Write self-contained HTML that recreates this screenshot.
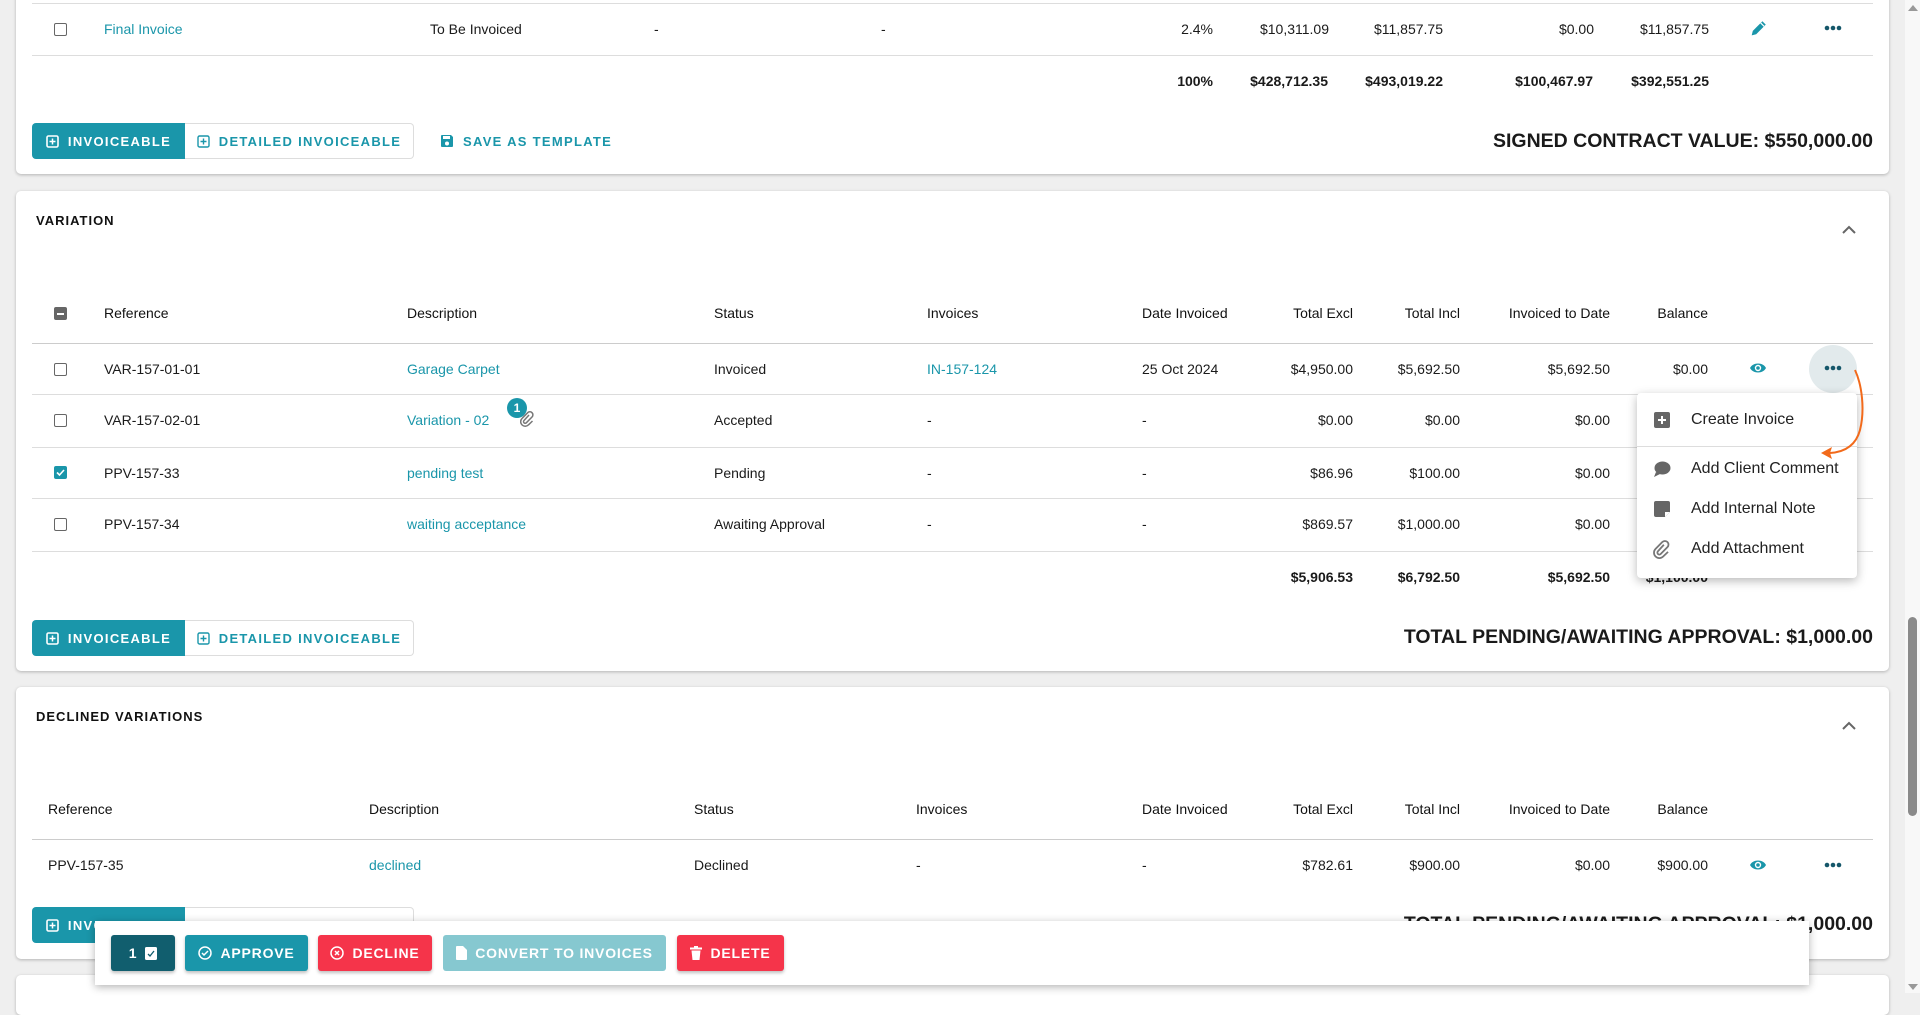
<!DOCTYPE html>
<html><head><meta charset="utf-8">
<style>
*{margin:0;padding:0;box-sizing:border-box}
body{width:1920px;height:993px;overflow:hidden;background:#efefef;font-family:"Liberation Sans",sans-serif;font-size:14px;color:#1a1a1a;position:relative}
.card{position:absolute;left:16px;width:1873px;background:#fff;border-radius:5px;box-shadow:0 1px 3px rgba(0,0,0,.25)}
.t{position:absolute;line-height:18px;white-space:nowrap}
.h{color:#111}
.b{font-weight:bold}
.big{font-weight:bold;font-size:19.5px;line-height:26px;right:47px}
.lk{color:#1a96aa}
.ln{position:absolute;left:32px;width:1841px;height:1px;background:#ddd}
.cb{position:absolute;width:13px;height:13px;border:1.5px solid #666;border-radius:2px}
.title{position:absolute;font-weight:bold;font-size:13px;letter-spacing:1px;color:#111}
.btn{position:absolute;height:36px;font-weight:bold;font-size:13px;letter-spacing:1.3px;display:flex;align-items:center;justify-content:center;gap:9px}
.ab{position:absolute;top:935px;height:36px;border-radius:3px;color:#fff;font-weight:bold;font-size:14px;letter-spacing:.8px;display:flex;align-items:center;justify-content:center;gap:8px;box-shadow:0 2px 3px rgba(0,0,0,.25)}
.mi{position:absolute;left:1691px;font-size:16px;color:#222;line-height:20px}
</style></head><body>

<!-- Card 1 -->
<div class="card" style="top:-20px;height:194px"></div>
<div class="ln" style="top:3px"></div>
<div class="cb" style="left:54px;top:23px"></div>
<div class="t lk" style="left:104px;top:20px">Final Invoice</div>
<div class="t" style="left:430px;top:20px">To Be Invoiced</div>
<div class="t" style="left:654px;top:20px">-</div>
<div class="t" style="left:881px;top:20px">-</div>
<div class="t" style="right:707px;top:20px">2.4%</div>
<div class="t" style="right:591px;top:20px">$10,311.09</div>
<div class="t" style="right:477px;top:20px">$11,857.75</div>
<div class="t" style="right:326px;top:20px">$0.00</div>
<div class="t" style="right:211px;top:20px">$11,857.75</div>
<svg style="position:absolute;left:1750px;top:19px" width="18" height="18" viewBox="0 0 16 16"><path d="M1.5 14.5l1-4 8.5-8.5 3 3-8.5 8.5z" fill="#1a96aa"/><path d="M9.5 3.5l3 3" stroke="#fff" stroke-width="1"/></svg>
<svg style="position:absolute;left:1823px;top:24px" width="20" height="8"><circle cx="4" cy="4" r="2.3" fill="#15576a"/><circle cx="10" cy="4" r="2.3" fill="#15576a"/><circle cx="16" cy="4" r="2.3" fill="#15576a"/></svg>
<div class="ln" style="top:55px"></div>
<div class="t b" style="right:707px;top:72px">100%</div>
<div class="t b" style="right:592px;top:72px">$428,712.35</div>
<div class="t b" style="right:477px;top:72px">$493,019.22</div>
<div class="t b" style="right:327px;top:72px">$100,467.97</div>
<div class="t b" style="right:211px;top:72px">$392,551.25</div>

<div class="btn" style="left:32px;top:123px;width:153px;background:#1a96aa;color:#fff;border-radius:4px 0 0 4px">
<svg width="13" height="13"><rect x="1" y="1" width="11" height="11" rx="1.5" fill="none" stroke="#fff" stroke-width="1.6"/><path d="M6.5 3.5v6M3.5 6.5h6" stroke="#fff" stroke-width="1.5"/></svg>INVOICEABLE</div>
<div class="btn" style="left:185px;top:123px;width:229px;border:1px solid #ddd;border-left:none;color:#1a96aa;border-radius:0 4px 4px 0">
<svg width="13" height="13"><rect x="1" y="1" width="11" height="11" rx="1.5" fill="none" stroke="#1a96aa" stroke-width="1.4"/><path d="M6.5 3.5v6M3.5 6.5h6" stroke="#1a96aa" stroke-width="1.4"/></svg>DETAILED INVOICEABLE</div>
<div class="btn" style="left:440px;top:123px;color:#1a96aa">
<svg width="14" height="14"><path d="M1 2a1 1 0 011-1h9l2 2v9a1 1 0 01-1 1H2a1 1 0 01-1-1z" fill="#1a96aa"/><rect x="3" y="2" width="7" height="3" fill="#fff"/><circle cx="7" cy="9.5" r="2" fill="#fff"/></svg>SAVE AS TEMPLATE</div>
<div class="t big" style="top:128px">SIGNED CONTRACT VALUE: $550,000.00</div>

<!-- Card 2 -->
<div class="card" style="top:191px;height:480px"></div>
<div class="title" style="left:36px;top:213px">VARIATION</div>
<svg style="position:absolute;left:1841px;top:225px" width="16" height="10"><path d="M2 8l6-6 6 6" fill="none" stroke="#666" stroke-width="2"/></svg>
<div style="position:absolute;left:54px;top:307px;width:13px;height:13px;background:#666;border-radius:2px"><div style="position:absolute;left:3px;top:5.5px;width:7px;height:2px;background:#fff"></div></div>
<div class="t h" style="left:104px;top:304px">Reference</div>
<div class="t h" style="left:407px;top:304px">Description</div>
<div class="t h" style="left:714px;top:304px">Status</div>
<div class="t h" style="left:927px;top:304px">Invoices</div>
<div class="t h" style="left:1142px;top:304px">Date Invoiced</div>
<div class="t h" style="right:567px;top:304px">Total Excl</div>
<div class="t h" style="right:460px;top:304px">Total Incl</div>
<div class="t h" style="right:310px;top:304px">Invoiced to Date</div>
<div class="t h" style="right:212px;top:304px">Balance</div>
<div class="ln" style="top:343px;background:#ccc"></div>

<div class="cb" style="left:54px;top:363px"></div>
<div class="t" style="left:104px;top:360px">VAR-157-01-01</div>
<div class="t lk" style="left:407px;top:360px">Garage Carpet</div>
<div class="t" style="left:714px;top:360px">Invoiced</div>
<div class="t lk" style="left:927px;top:360px">IN-157-124</div>
<div class="t" style="left:1142px;top:360px">25 Oct 2024</div>
<div class="t" style="right:567px;top:360px">$4,950.00</div>
<div class="t" style="right:460px;top:360px">$5,692.50</div>
<div class="t" style="right:310px;top:360px">$5,692.50</div>
<div class="t" style="right:212px;top:360px">$0.00</div>
<svg style="position:absolute;left:1749px;top:361px" width="18" height="14" viewBox="0 0 18 14"><path d="M1 7C4 1 14 1 17 7 14 13 4 13 1 7z" fill="#1a96aa"/><circle cx="9" cy="7" r="3.2" fill="#fff"/><circle cx="9" cy="7" r="1.8" fill="#1a96aa"/></svg>
<div style="position:absolute;left:1809px;top:345px;width:48px;height:48px;border-radius:50%;background:#e2eaec"></div>
<svg style="position:absolute;left:1823px;top:364px" width="20" height="8"><circle cx="4" cy="4" r="2.3" fill="#15576a"/><circle cx="10" cy="4" r="2.3" fill="#15576a"/><circle cx="16" cy="4" r="2.3" fill="#15576a"/></svg>
<div class="ln" style="top:394px"></div>

<div class="cb" style="left:54px;top:414px"></div>
<div class="t" style="left:104px;top:411px">VAR-157-02-01</div>
<div class="t lk" style="left:407px;top:411px">Variation - 02</div>
<div style="position:absolute;left:507px;top:398px;width:20px;height:20px;border-radius:50%;background:#1a96aa;color:#fff;font-size:12px;font-weight:bold;text-align:center;line-height:20px">1</div>
<svg style="position:absolute;left:520px;top:411px" width="14" height="16" viewBox="0 0 14 16"><path d="M9 4l-5 5.5a1.6 1.6 0 002.3 2.3L12 6a3 3 0 00-4.3-4.3L2 7.5a4.5 4.5 0 006.4 6.4L12.5 10" fill="none" stroke="#777" stroke-width="1.5"/></svg>
<div class="t" style="left:714px;top:411px">Accepted</div>
<div class="t" style="left:927px;top:411px">-</div>
<div class="t" style="left:1142px;top:411px">-</div>
<div class="t" style="right:567px;top:411px">$0.00</div>
<div class="t" style="right:460px;top:411px">$0.00</div>
<div class="t" style="right:310px;top:411px">$0.00</div>
<div class="ln" style="top:447px"></div>

<div style="position:absolute;left:54px;top:466px;width:13px;height:13px;background:#1a96aa;border-radius:2px"></div>
<svg style="position:absolute;left:54px;top:466px" width="13" height="13"><path d="M3 6.5l2.5 2.5 4.5-5" fill="none" stroke="#fff" stroke-width="1.6"/></svg>
<div class="t" style="left:104px;top:464px">PPV-157-33</div>
<div class="t lk" style="left:407px;top:464px">pending test</div>
<div class="t" style="left:714px;top:464px">Pending</div>
<div class="t" style="left:927px;top:464px">-</div>
<div class="t" style="left:1142px;top:464px">-</div>
<div class="t" style="right:567px;top:464px">$86.96</div>
<div class="t" style="right:460px;top:464px">$100.00</div>
<div class="t" style="right:310px;top:464px">$0.00</div>
<div class="ln" style="top:498px"></div>

<div class="cb" style="left:54px;top:518px"></div>
<div class="t" style="left:104px;top:515px">PPV-157-34</div>
<div class="t lk" style="left:407px;top:515px">waiting acceptance</div>
<div class="t" style="left:714px;top:515px">Awaiting Approval</div>
<div class="t" style="left:927px;top:515px">-</div>
<div class="t" style="left:1142px;top:515px">-</div>
<div class="t" style="right:567px;top:515px">$869.57</div>
<div class="t" style="right:460px;top:515px">$1,000.00</div>
<div class="t" style="right:310px;top:515px">$0.00</div>
<div class="ln" style="top:551px"></div>

<div class="t b" style="right:567px;top:568px">$5,906.53</div>
<div class="t b" style="right:460px;top:568px">$6,792.50</div>
<div class="t b" style="right:310px;top:568px">$5,692.50</div>
<div class="t b" style="right:212px;top:568px">$1,100.00</div>

<div class="btn" style="left:32px;top:620px;width:153px;background:#1a96aa;color:#fff;border-radius:4px 0 0 4px">
<svg width="13" height="13"><rect x="1" y="1" width="11" height="11" rx="1.5" fill="none" stroke="#fff" stroke-width="1.6"/><path d="M6.5 3.5v6M3.5 6.5h6" stroke="#fff" stroke-width="1.5"/></svg>INVOICEABLE</div>
<div class="btn" style="left:185px;top:620px;width:229px;border:1px solid #ddd;border-left:none;color:#1a96aa;border-radius:0 4px 4px 0">
<svg width="13" height="13"><rect x="1" y="1" width="11" height="11" rx="1.5" fill="none" stroke="#1a96aa" stroke-width="1.4"/><path d="M6.5 3.5v6M3.5 6.5h6" stroke="#1a96aa" stroke-width="1.4"/></svg>DETAILED INVOICEABLE</div>
<div class="t big" style="top:624px">TOTAL PENDING/AWAITING APPROVAL: $1,000.00</div>

<!-- Card 3 -->
<div class="card" style="top:687px;height:272px"></div>
<div class="title" style="left:36px;top:709px">DECLINED VARIATIONS</div>
<svg style="position:absolute;left:1841px;top:721px" width="16" height="10"><path d="M2 8l6-6 6 6" fill="none" stroke="#666" stroke-width="2"/></svg>
<div class="t h" style="left:48px;top:800px">Reference</div>
<div class="t h" style="left:369px;top:800px">Description</div>
<div class="t h" style="left:694px;top:800px">Status</div>
<div class="t h" style="left:916px;top:800px">Invoices</div>
<div class="t h" style="left:1142px;top:800px">Date Invoiced</div>
<div class="t h" style="right:567px;top:800px">Total Excl</div>
<div class="t h" style="right:460px;top:800px">Total Incl</div>
<div class="t h" style="right:310px;top:800px">Invoiced to Date</div>
<div class="t h" style="right:212px;top:800px">Balance</div>
<div class="ln" style="top:839px;background:#ccc"></div>
<div class="t" style="left:48px;top:856px">PPV-157-35</div>
<div class="t lk" style="left:369px;top:856px">declined</div>
<div class="t" style="left:694px;top:856px">Declined</div>
<div class="t" style="left:916px;top:856px">-</div>
<div class="t" style="left:1142px;top:856px">-</div>
<div class="t" style="right:567px;top:856px">$782.61</div>
<div class="t" style="right:460px;top:856px">$900.00</div>
<div class="t" style="right:310px;top:856px">$0.00</div>
<div class="t" style="right:212px;top:856px">$900.00</div>
<svg style="position:absolute;left:1749px;top:858px" width="18" height="14" viewBox="0 0 18 14"><path d="M1 7C4 1 14 1 17 7 14 13 4 13 1 7z" fill="#1a96aa"/><circle cx="9" cy="7" r="3.2" fill="#fff"/><circle cx="9" cy="7" r="1.8" fill="#1a96aa"/></svg>
<svg style="position:absolute;left:1823px;top:861px" width="20" height="8"><circle cx="4" cy="4" r="2.3" fill="#15576a"/><circle cx="10" cy="4" r="2.3" fill="#15576a"/><circle cx="16" cy="4" r="2.3" fill="#15576a"/></svg>
<div class="btn" style="left:32px;top:907px;width:153px;background:#1a96aa;color:#fff;border-radius:4px 0 0 4px">
<svg width="13" height="13"><rect x="1" y="1" width="11" height="11" rx="1.5" fill="none" stroke="#fff" stroke-width="1.6"/><path d="M6.5 3.5v6M3.5 6.5h6" stroke="#fff" stroke-width="1.5"/></svg>INVOICEABLE</div>
<div class="btn" style="left:185px;top:907px;width:229px;border:1px solid #ddd;border-left:none;color:#1a96aa;border-radius:0 4px 4px 0">DETAILED INVOICEABLE</div>
<div class="t big" style="top:911px">TOTAL PENDING/AWAITING APPROVAL: $1,000.00</div>

<div class="card" style="top:975px;height:40px"></div>

<!-- Bottom action bar -->
<div style="position:absolute;left:95px;top:921px;width:1714px;height:64px;background:#fff;box-shadow:0 2px 8px rgba(0,0,0,.3)"></div>
<div class="ab" style="left:111px;width:64px;background:#115e6e">1 <svg width="12" height="13"><rect x="0" y="0" width="12" height="13" rx="1.5" fill="#fff"/><path d="M3 7l2 2 4-5" fill="none" stroke="#115e6e" stroke-width="1.3"/></svg></div>
<div class="ab" style="left:185px;width:123px;background:#1a96aa"><svg width="14" height="14"><circle cx="7" cy="7" r="6" fill="none" stroke="#fff" stroke-width="1.5"/><path d="M4 7l2 2 4-4" fill="none" stroke="#fff" stroke-width="1.5"/></svg>APPROVE</div>
<div class="ab" style="left:318px;width:114px;background:#f5344a"><svg width="14" height="14"><circle cx="7" cy="7" r="6" fill="none" stroke="#fff" stroke-width="1.5"/><path d="M5 5l4 4M9 5l-4 4" stroke="#fff" stroke-width="1.5"/></svg>DECLINE</div>
<div class="ab" style="left:443px;width:223px;background:#86c8d0;box-shadow:none"><svg width="11" height="14"><path d="M0 1a1 1 0 011-1h6l4 4v9a1 1 0 01-1 1H1a1 1 0 01-1-1z" fill="#fff"/></svg>CONVERT TO INVOICES</div>
<div class="ab" style="left:677px;width:107px;background:#f5344a"><svg width="12" height="14"><rect x="0" y="1.5" width="12" height="2" fill="#fff"/><rect x="4" y="0" width="4" height="2" fill="#fff"/><path d="M1.5 4.5h9l-1 9.5h-7z" fill="#fff"/></svg>DELETE</div>

<!-- Dropdown menu -->
<div style="position:absolute;left:1637px;top:393px;width:220px;height:185px;background:#fff;border-radius:4px;box-shadow:0 3px 10px rgba(0,0,0,.28)"></div>
<svg style="position:absolute;left:1654px;top:412px" width="16" height="16"><rect width="16" height="16" rx="2" fill="#666"/><path d="M8 4v8M4 8h8" stroke="#fff" stroke-width="2"/></svg>
<div class="mi" style="top:410px">Create Invoice</div>
<div style="position:absolute;left:1637px;top:446px;width:220px;height:1px;background:#ddd"></div>
<svg style="position:absolute;left:1653px;top:461px" width="18" height="17"><ellipse cx="9.5" cy="7" rx="8" ry="6.5" fill="#666"/><path d="M3 11l-2 5 6-3z" fill="#666"/></svg>
<div class="mi" style="top:459px">Add Client Comment</div>
<svg style="position:absolute;left:1654px;top:501px" width="16" height="16"><path d="M2 0h12a2 2 0 012 2v9l-5 5H2a2 2 0 01-2-2V2a2 2 0 012-2z" fill="#666"/><path d="M11 16v-5h5" fill="#fff"/></svg>
<div class="mi" style="top:499px">Add Internal Note</div>
<svg style="position:absolute;left:1653px;top:540px" width="17" height="19" viewBox="0 0 14 16"><path d="M9 4l-5 5.5a1.6 1.6 0 002.3 2.3L12 6a3 3 0 00-4.3-4.3L2 7.5a4.5 4.5 0 006.4 6.4L12.5 10" fill="none" stroke="#777" stroke-width="1.5"/></svg>
<div class="mi" style="top:539px">Add Attachment</div>

<!-- Orange annotation arrow -->
<svg style="position:absolute;left:1810px;top:360px" width="60" height="110"><path d="M45 10C52 25 55 50 50 70 46 85 35 92 20 93" fill="none" stroke="#f26a1b" stroke-width="2"/><path d="M11 93l11-6-2 6 2 6z" fill="#f26a1b"/></svg>

<!-- Scrollbar -->
<div style="position:absolute;left:1905px;top:0;width:15px;height:993px;background:#f8f8f8"></div>
<div style="position:absolute;left:1908px;top:617px;width:9px;height:199px;background:#8a8a8a;border-radius:5px"></div>
<svg style="position:absolute;left:1908px;top:4px" width="10" height="8"><path d="M0 7l5-6 5 6z" fill="#999"/></svg>
<svg style="position:absolute;left:1908px;top:983px" width="10" height="8"><path d="M0 1l5 6 5-6z" fill="#999"/></svg>
</body></html>
